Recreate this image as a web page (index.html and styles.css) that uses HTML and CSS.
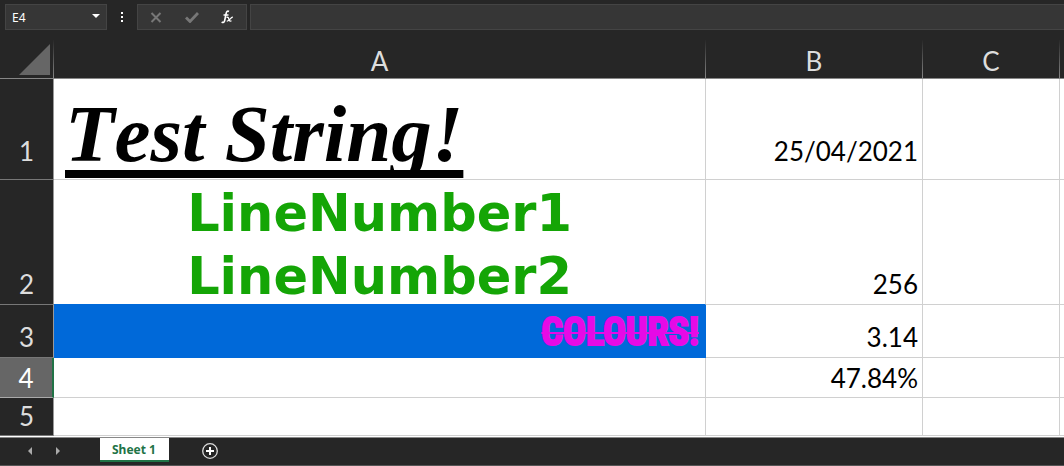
FILE: index.html
```html
<!DOCTYPE html>
<html lang="en">
<head>
<meta charset="utf-8">
<title>Sheet 1</title>
<link rel="stylesheet" href="styles.css">
</head>
<body>
<div class="app">
  <header class="formula-bar">
    <div class="name-box">
      <input class="name-input" type="text" value="E4" aria-label="Name box">
      <button class="name-toggle" type="button" aria-label="Show names">
        <svg width="8" height="4" viewBox="0 0 8 4"><path d="M0 0h8L4 4z" fill="#fff"/></svg>
      </button>
    </div>
    <svg class="grip" width="2" height="10" viewBox="0 0 2 10"><path d="M0 0h2v2H0zM0 4h2v2H0zM0 8h2v2H0z" fill="#fff"/></svg>
    <div class="edit-tools">
      <button class="tool" type="button" aria-label="Cancel">
        <svg width="12" height="11" viewBox="0 0 12 11"><path d="M1.500 1l9 9M10.500 1l-9 9" stroke="#777" stroke-width="2" fill="none"/></svg>
      </button>
      <button class="tool" type="button" aria-label="Enter">
        <svg width="14" height="11" viewBox="0 0 14 11"><path d="M1 5.500l4 4L13 1" stroke="#777" stroke-width="2.800" fill="none"/></svg>
      </button>
      <button class="tool" type="button" aria-label="Insert function">
        <svg width="13" height="14" viewBox="0 0 13 14" fill="none" stroke="#fff"><path d="M8 1.500C6.500.5 5.500 1.500 5 4L3.700 10.500C3.300 12.500 2 13 .700 12" stroke-width="1.600"/><path d="M2.500 5h5M5.500 7.500c2-.8 2 .5 2.500 2s1 2.200 2.500 1.300" stroke-width="1.300"/><path d="M11.800 7.300c-2-.6-3.200 4.200-6 3.700" stroke-width="1.300"/></svg>
      </button>
    </div>
    <input class="formula-input" type="text" aria-label="Formula">
  </header>

  <main class="sheet">
    <table class="grid">
      <colgroup><col class="col-head"><col class="col-a"><col class="col-b"><col class="col-c"><col></colgroup>
      <thead>
        <tr>
          <th class="corner"><svg width="31" height="31" viewBox="0 0 31 31"><path d="M31 0v31H0z" fill="#666"/></svg></th>
          <th scope="col">A</th><th scope="col">B</th><th scope="col">C</th><th class="edge"></th>
        </tr>
      </thead>
      <tbody>
        <tr class="row-1"><th scope="row">1</th><td class="title-cell"><span class="title">Test String!</span></td><td>25/04/2021</td><td></td><td class="edge"></td></tr>
        <tr class="row-2"><th scope="row">2</th><td class="lines-cell"><div class="lines"><span>LineNumber1</span><span>LineNumber2</span></div></td><td>256</td><td></td><td class="edge"></td></tr>
        <tr class="row-3"><th scope="row">3</th><td class="colour-cell"><s class="colour-text">COLOURS!</s></td><td>3.14</td><td></td><td class="edge"></td></tr>
        <tr class="row-4"><th scope="row">4</th><td></td><td>47.84%</td><td></td><td class="edge"></td></tr>
        <tr class="row-5"><th scope="row">5</th><td></td><td></td><td></td><td class="edge"></td></tr>
      </tbody>
    </table>
  </main>

  <footer class="tabs">
    <button class="nav" type="button" aria-label="Previous sheet"><svg width="4" height="8" viewBox="0 0 4 8"><path d="M4 0v8L0 4z" fill="#aaa"/></svg></button>
    <button class="nav" type="button" aria-label="Next sheet"><svg width="4" height="8" viewBox="0 0 4 8"><path d="M0 0v8l4-4z" fill="#aaa"/></svg></button>
    <button class="tab" type="button">Sheet 1</button>
    <button class="add" type="button" aria-label="New sheet"><svg width="16" height="16" viewBox="0 0 16 16"><circle cx="8" cy="8" r="7.300" fill="none" stroke="#ddd" stroke-width="1.300"/><path d="M8 4v8M4 8h8" stroke="#fff" stroke-width="2"/></svg></button>
  </footer>
</div>
</body>
</html>
```
FILE: styles.css
```css
* { box-sizing: border-box; }
body { margin: 0; background: #262626; }
button, input { margin: 0; padding: 0; border: 0; background: none; color: #fff; font: 12px/16px "Noto Sans", sans-serif; }
svg { display: block; }

.app { display: flex; flex-direction: column; min-height: 100vh; overflow: hidden; border-bottom: 1px solid #555; }

.formula-bar { display: flex; align-items: center; height: 40px; padding: 4px 0 10px 5px; }
.name-box { display: flex; align-items: center; width: 102px; height: 26px; padding: 0 6px 0 6px; border: 1px solid #444; background: #363636; }
.name-input { flex: 1; min-width: 0; padding-top: 1px; }
.name-toggle { padding: 4px 0 6px; }
.grip { margin: 0 14px; }
.edit-tools { display: flex; align-items: center; justify-content: space-between; width: 110px; height: 26px; padding: 0 12px; border: 1px solid #444; background: #363636; }
.formula-input { flex: 1; min-width: 0; height: 26px; margin-left: 3px; border: 1px solid #444; border-right: 0; background: #363636; }

.sheet { flex: 1; background: #fff; }
.grid { width: 100%; table-layout: fixed; border-collapse: separate; border-spacing: 0; font: 26px/32px Lato, sans-serif; }
.col-head { width: 54px; }
.col-a { width: 652px; }
.col-b { width: 217px; }
.col-c { width: 137px; }
.grid th { padding: 0 0 4px; background: #262626; color: #ddd; font-weight: 400; }
.grid thead th { height: 39px; border-right: 1px solid; border-bottom: 1px solid #999; border-image: linear-gradient(#262626, #888) 1; vertical-align: bottom; padding-bottom: 1px; }
.grid thead .corner { padding: 0 3px 3px 19px; }
.grid tbody th { border-right: 1px solid #999; border-bottom: 1px solid #777; vertical-align: bottom; }
.grid td { padding: 0 4px 4px 10px; border-right: 1px solid #d0d0d0; border-bottom: 1px solid #d0d0d0; vertical-align: bottom; text-align: right; color: #000; }
.grid .edge { border-right-width: 0; }

.row-1 { height: 101px; }
.grid .row-1 > * { padding-bottom: 12px; }
.row-2 { height: 125px; }
.row-3 { height: 53px; }
.row-4 { height: 40px; }
.row-5 { height: 38px; }
.grid .row-4 > *, .grid .row-5 > * { padding-bottom: 3px; }

.grid .title-cell { padding: 0 11px 2px; text-align: left; }
.title { display: block; font: italic bold 81px/86px "Liberation Serif", serif; font-kerning: none; text-decoration: underline 8px; text-decoration-skip-ink: none; text-underline-offset: 9px; }
.grid .lines-cell { padding: 0; border-bottom-color: #0069d9; color: #14a506; font: bold 51px/54px "DejaVu Sans", sans-serif; }
.lines { display: flex; flex-direction: column; align-items: flex-start; gap: 9px; width: max-content; margin: 0 auto; }
.grid .colour-cell { padding: 0 6px 0 0; background: #0069d9; border-color: #0069d9; }
.colour-text { display: block; color: #e60ae6; font: bold 38px/50px Impact, "Roboto Condensed", "Open Sans Condensed", "DejaVu Sans Condensed", sans-serif; -webkit-text-stroke: 2px #e60ae6; text-decoration-thickness: 2px; }
.grid .row-4 th { background: #666; color: #fff; border-right: 2px solid #217346; border-bottom-color: #aaa; }

.tabs { display: flex; align-items: center; height: 28px; padding-bottom: 1px; border-top: 1px solid #888; }
.nav { padding: 4px 0; margin-left: 28px; }
.nav + .nav { margin-left: 24px; }
.tab { align-self: flex-start; height: 24px; margin: 0 33px 0 40px; padding: 2px 13px 0 12px; border-bottom: 2px solid #217346; background: #fff; color: #217346; font-weight: 700; }
```
